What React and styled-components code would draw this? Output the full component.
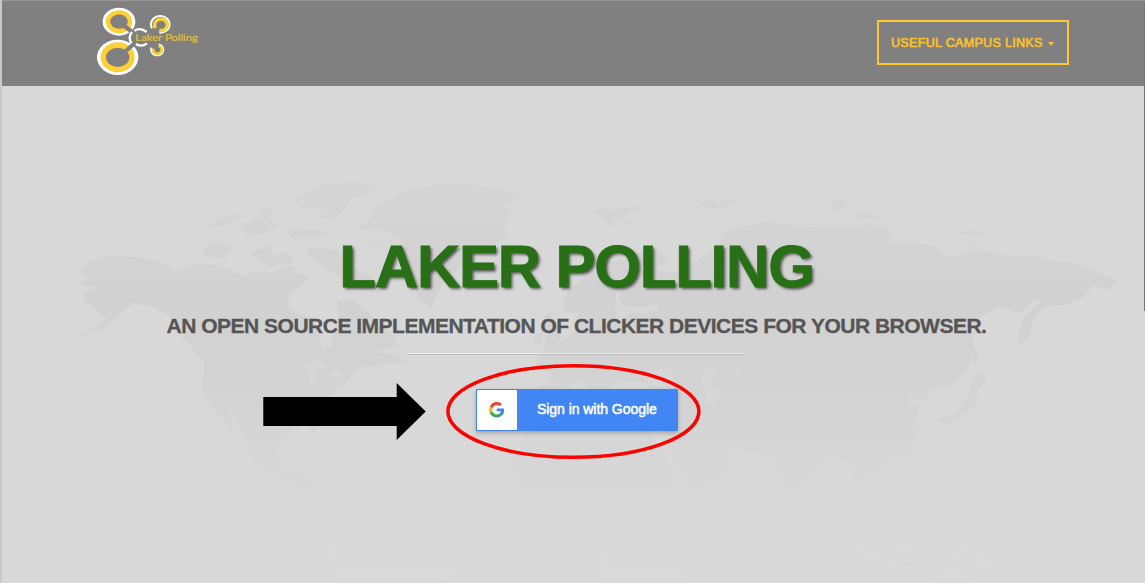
import React from "react";
import styled, { createGlobalStyle } from "styled-components";

const GlobalStyle = createGlobalStyle`
  * { box-sizing: border-box; }
  body { margin: 0; overflow: hidden; background: #d8d8d8; font-family: "Liberation Sans", Arial, sans-serif; }
`;

const Page = styled.div`
  position: relative;
  height: 583px;
  display: flex;
  flex-direction: column;
  background: #d8d8d8;
  border-left: 2px solid #c9c9c9;
  overflow: hidden;
`;

const Header = styled.header`
  height: 86px;
  flex: none;
  display: flex;
  justify-content: space-between;
  align-items: flex-start;
  padding: 0 76px 0 78px;
  background: #808080;
  border-top: 1px solid #979797;
`;

const Logo = styled.svg`
  display: block;
  width: 140px;
  height: 84px;
`;

const NavButton = styled.button`
  display: flex;
  align-items: center;
  height: 45px;
  width: 192px;
  margin-top: 19px;
  padding: 0 0 0 12px;
  border: 2px solid #fdc92f;
  background: transparent;
  color: #fbc02a;
  font: 12.5px "Liberation Sans", Arial, sans-serif;
  letter-spacing: 0.33px;
  -webkit-text-stroke: 0.65px #fbc02a;
  white-space: nowrap;
`;

const Caret = styled.span`
  margin: 2px 0 0 5px;
  border: 3.5px solid transparent;
  border-top: 4px solid #fbc02a;
  border-bottom: 0;
`;

const Hero = styled.main`
  position: relative;
  flex: 1;
  display: flex;
  flex-direction: column;
  align-items: center;
  padding-top: 146px;
  padding-left: 6px;
`;

const WorldMap = styled.svg`
  position: absolute;
  left: -2px;
  top: -86px;
  width: 1145px;
  height: 583px;
`;

const Title = styled.h1`
  position: relative;
  margin: 0;
  height: 70px;
  line-height: 70px;
  font-size: 60px;
  letter-spacing: -1.2px;
  color: #287016;
  -webkit-text-stroke: 0.8px #287016;
  text-shadow: 2px 2px 3px rgba(0, 0, 0, 0.6);
  white-space: nowrap;
`;

const Subtitle = styled.h2`
  position: relative;
  margin: 12px 0 0;
  height: 24px;
  line-height: 24px;
  font-size: 21px;
  letter-spacing: -0.5px;
  color: #555;
  -webkit-text-stroke: 0.3px #555;
  white-space: nowrap;
`;

const Divider = styled.div`
  position: relative;
  width: 337px;
  height: 2px;
  margin-top: 15px;
  border-top: 1px solid #eee;
  border-bottom: 1px solid #bdbdbd;
`;

const GoogleButton = styled.button`
  position: relative;
  display: flex;
  align-items: center;
  width: 202px;
  height: 42px;
  margin-top: 34px;
  padding: 1px;
  border: 0;
  border-radius: 1px;
  background: #4285f4;
  box-shadow: 0 2px 4px rgba(0, 0, 0, 0.25);
  color: #fff;
`;

const GoogleIcon = styled.span`
  display: flex;
  width: 40px;
  height: 40px;
  align-items: center;
  justify-content: center;
  background: #fff;
  border-radius: 1px;
`;

const GoogleLabel = styled.span`
  margin: 0 0 2px 20.5px;
  font: 14px/18px "Liberation Sans", Arial, sans-serif;
  letter-spacing: -0.05px;
  -webkit-text-stroke: 0.5px #fff;
  white-space: nowrap;
`;

const Annotations = styled.svg`
  position: absolute;
  left: -2px;
  top: 0;
  width: 1145px;
  height: 583px;
  pointer-events: none;
`;

const ScrollThumb = styled.div`
  position: absolute;
  right: 0;
  top: 2px;
  width: 1px;
  height: 309px;
  background: #777;
`;

function LakerLogo() {
  return (
    <Logo viewBox="0 3 420 252">
      <ellipse cx="117" cy="65" rx="49" ry="42" fill="#fff" />
      <ellipse cx="113" cy="172" rx="62" ry="53" fill="#fff" />
      <ellipse cx="117" cy="65" rx="33" ry="28" fill="#808080" stroke="#fdd034" strokeWidth="13" />
      <ellipse cx="113" cy="172" rx="43" ry="37" fill="#808080" stroke="#fdd034" strokeWidth="16" />
      <path d="M132 77 L166 103 M134 156 L170 124" stroke="#808080" strokeWidth="13" />
      <path d="M163 92 Q181 81 200 96 M156 96 Q143 111 154 130 M168 132 Q184 143 201 130" fill="none" stroke="#fff" strokeWidth="7" />
      <path d="M216 85 A28 25 0 1 1 238 98" fill="none" stroke="#fff" strokeWidth="6" />
      <path d="M227 84 A19 17 0 1 1 238 91" fill="none" stroke="#fdd034" strokeWidth="10" />
      <path d="M214 143 A19 17 0 1 0 236 133" fill="none" stroke="#fff" strokeWidth="5" />
      <path d="M220 146 A13 12 0 1 0 236 138" fill="none" stroke="#fdd034" strokeWidth="8" />
      <text x="166" y="122" textLength="188" lengthAdjust="spacingAndGlyphs" fill="#e3bf3d" stroke="#e3bf3d" strokeWidth="0.6" fontFamily="Lato, sans-serif" fontSize="30">Laker Polling</text>
    </Logo>
  );
}

function GoogleG() {
  return (
    <svg width="15.5" height="15.5" viewBox="0 0 48 48">
      <path fill="#EA4335" d="M24 9.5c3.54 0 6.71 1.22 9.21 3.6l6.85-6.85C35.9 2.38 30.47 0 24 0 14.62 0 6.51 5.38 2.56 13.22l7.98 6.19C12.43 13.72 17.74 9.5 24 9.5z" />
      <path fill="#4285F4" d="M46.98 24.55c0-1.57-.15-3.09-.38-4.55H24v9.02h12.94c-.58 2.96-2.26 5.48-4.78 7.18l7.73 6c4.51-4.18 7.09-10.36 7.09-17.65z" />
      <path fill="#FBBC05" d="M10.53 28.59A14.4 14.4 0 0 1 9.77 24c0-1.6.27-3.14.76-4.59l-7.98-6.19A23.9 23.9 0 0 0 0 24c0 3.88.92 7.54 2.56 10.78l7.97-6.19z" />
      <path fill="#34A853" d="M24 48c6.48 0 11.93-2.13 15.89-5.81l-7.73-6c-2.15 1.45-4.92 2.3-8.16 2.3-6.26 0-11.57-4.22-13.47-9.91l-7.98 6.19C6.51 42.62 14.62 48 24 48z" />
    </svg>
  );
}

function MapBackdrop() {
  return (
    <WorldMap viewBox="0 0 1145 583" aria-hidden="true">
      <defs>
        <linearGradient id="land" gradientUnits="userSpaceOnUse" x1="0" y1="180" x2="0" y2="583">
          <stop offset="0" stopColor="#d5d5d5" />
          <stop offset="0.3" stopColor="#d1d1d1" />
          <stop offset="0.5" stopColor="#d3d3d3" />
          <stop offset="0.76" stopColor="#d7d7d7" />
          <stop offset="0.87" stopColor="#d9d9d9" />
          <stop offset="1" stopColor="#dadada" />
        </linearGradient>
      </defs>
      <g fill="url(#land)">
        {/* North America */}
        <path d="M81 269 L91 261 L108 255 L124 256 L143 258 L164 263 L171 268 L175 273 L194 263 L216 265 L229 269 L244 276 L253 271 L274 272 L291 265 L297 273 L310 276 L300 286 L288 297 L289 310 L304 315 L318 327 L322 349 L331 348 L334 330 L339 316 L337 302 L351 298 L363 309 L371 314 L381 326 L393 335 L399 347 L378 351 L363 359 L367 363 L354 373 L346 384 L333 392 L329 406 L317 417 L316 436 L310 432 L306 425 L285 433 L277 443 L280 466 L289 473 L303 464 L301 478 L315 482 L321 498 L308 495 L294 485 L276 479 L256 468 L254 454 L242 432 L230 412 L233 433 L240 452 L230 430 L219 414 L207 404 L202 388 L204 362 L191 347 L177 332 L168 315 L153 307 L134 303 L124 310 L108 325 L91 335 L109 318 L100 316 L94 306 L84 301 L85 292 L97 287 L79 284 L88 279 Z" />
        {/* Greenland and the Arctic islands */}
        <path d="M354 229 L368 221 L375 206 L398 193 L431 185 L449 183 L490 187 L525 196 L503 205 L512 213 L503 229 L508 236 L497 244 L480 249 L462 266 L443 283 L431 308 L420 300 L410 281 L408 260 L398 238 L386 232 Z" />
        <path d="M288 205 L304 195 L323 184 L354 181 L380 187 L367 195 L350 199 L344 210 L333 220 L315 218 L328 209 L301 208 L307 199 Z M207 229 L220 218 L236 214 L244 216 L225 226 Z M203 249 L217 240 L232 248 L225 259 L205 256 Z M241 226 L265 215 L278 225 L265 235 L246 236 Z M283 231 L316 229 L330 235 L294 240 Z M309 246 L337 250 L350 267 L374 279 L368 291 L352 286 L339 277 L326 267 L307 256 Z M251 254 L267 244 L276 255 L288 251 L294 263 L270 267 Z M258 211 L269 208 L276 213 L268 218 Z" />
        <path d="M355 366 L373 352 L394 354 L407 363 L390 363 L378 367 Z M67 294 L75 296 L70 297 Z M343 474 L363 474 L382 481 L369 486 L352 482 Z" />
        {/* Eurasia */}
        <path d="M535 365 L543 350 L563 341 L575 331 L578 312 L596 290 L615 265 L637 253 L657 249 L668 260 L655 270 L675 272 L694 262 L709 252 L721 241 L726 229 L765 221 L811 227 L845 226 L893 232 L887 242 L902 241 L936 246 L944 257 L965 254 L974 248 L1002 255 L1034 256 L1054 261 L1077 263 L1103 275 L1117 281 L1108 290 L1093 285 L1084 297 L1065 305 L1044 306 L1034 318 L1029 335 L1019 348 L1018 331 L1025 316 L1041 302 L1034 299 L1019 314 L1001 306 L982 316 L973 327 L974 350 L968 368 L954 384 L938 389 L932 389 L926 401 L911 398 L908 400 L919 406 L916 420 L917 438 L909 451 L900 459 L884 463 L882 479 L873 474 L870 466 L862 477 L874 495 L867 492 L855 478 L851 461 L840 459 L827 458 L816 466 L807 480 L793 500 L784 490 L776 467 L773 458 L760 453 L737 450 L714 443 L705 432 L703 423 L711 440 L727 455 L733 467 L719 481 L692 491 L681 473 L668 445 L664 430 L682 426 L676 420 L646 421 L627 417 L628 402 L637 396 L655 392 L640 382 L617 382 L600 398 L590 391 L583 380 L574 383 L560 391 L551 409 L534 411 L533 388 L548 383 L552 374 Z" />
        {/* Scandinavia, Britain and the islands to the north */}
        <path d="M563 300 L571 287 L591 274 L608 262 L622 260 L626 272 L616 286 L615 306 L603 318 L598 310 L589 308 L581 314 L565 312 Z M543 318 L550 311 L555 325 L562 338 L554 345 L543 349 L547 336 Z M536 334 L544 331 L541 343 L532 345 Z M595 211 L607 208 L619 210 L633 205 L641 208 L629 214 L622 216 L633 222 L626 224 L618 218 L611 228 L605 221 L597 216 Z M697 203 L712 198 L718 204 L729 197 L739 202 L725 208 L710 209 Z M831 200 L843 199 L848 208 L834 212 Z M853 216 L867 211 L880 218 L862 220 Z M860 223 L894 229 L873 237 L859 233 Z M721 243 L735 234 L763 228 L748 236 L733 247 Z M957 232 L978 230 L986 235 L966 236 Z M970 241 L981 243 L973 245 Z M1082 257 L1097 256 L1090 258 Z" />
        {/* Africa, South America, Japan and the southern islands */}
        <path d="M530 423 L552 410 L577 411 L596 420 L624 424 L649 429 L661 449 L681 488 L697 494 L717 492 L702 514 L690 530 L682 551 L683 583 L603 583 L601 546 L591 533 L591 510 L569 503 L538 500 L514 487 L516 459 Z M330 538 L350 525 L380 530 L409 535 L421 546 L458 552 L454 575 L442 583 L337 583 L331 559 Z M975 374 L982 371 L987 380 L978 388 L975 405 L960 417 L944 426 L939 420 L958 410 L968 396 Z M973 345 L979 359 L974 363 Z M850 531 L861 541 L879 557 L873 561 L858 548 Z M891 538 L913 527 L921 541 L907 551 L894 548 Z M936 546 L954 542 L974 551 L999 566 L979 566 L953 557 Z M878 560 L914 567 L908 570 L882 565 Z M926 583 L957 565 L974 583 Z" />
      </g>
      <g fill="#d7d7d7">
        <path d="M705 370 L716 367 L717 374 L710 378 L714 387 L720 391 L716 404 L706 403 L706 391 L702 380 Z M735 373 L739 369 L740 376 L736 378 Z M645 374 L659 370 L671 367 L674 382 L663 387 L650 384 Z M616 292 L622 285 L619 298 L622 306 L641 307 L658 304 L659 310 L642 314 L629 313 L617 323 L615 310 Z M301 365 L316 360 L327 367 L314 370 Z M309 373 L315 368 L316 381 L310 385 Z M330 372 L340 370 L342 378 L334 378 Z M365 247 L371 237 L395 239 L402 256 L390 252 Z" />
      </g>
      <g fill="none" stroke="#d3d3d3" strokeWidth="2" strokeLinecap="round">
        <path d="M723 244 Q731 236 762 228 M107 319 Q95 330 79 336" />
        <path strokeDasharray="1 7" d="M976 381 Q1003 365 1017 345 M1044 330 L1065 342 M650 212 L662 210 M1060 229 L1070 227" />
        <path stroke="#d6d6d6" strokeDasharray="2 6" d="M322 437 L342 452 L351 468 M97 458 L115 468 M932 438 L910 467 L922 488" />
      </g>
    </WorldMap>
  );
}

export default function App() {
  return (
    <>
      <GlobalStyle />
      <Page>
        <Header>
          <LakerLogo />
          <NavButton>
            USEFUL CAMPUS LINKS
            <Caret />
          </NavButton>
        </Header>
        <Hero>
          <MapBackdrop />
          <Title>LAKER POLLING</Title>
          <Subtitle>AN OPEN SOURCE IMPLEMENTATION OF CLICKER DEVICES FOR YOUR BROWSER.</Subtitle>
          <Divider />
          <GoogleButton>
            <GoogleIcon>
              <GoogleG />
            </GoogleIcon>
            <GoogleLabel>Sign in with Google</GoogleLabel>
          </GoogleButton>
        </Hero>
        <Annotations viewBox="0 0 1145 583" aria-hidden="true">
          <path d="M263.3 397 H396.7 V383 L425.7 411.5 L396.7 440 V426 H263.3 Z" />
          <ellipse cx="573.4" cy="411.5" rx="125.5" ry="45.8" fill="none" stroke="#f00" strokeWidth="3.5" />
        </Annotations>
        <ScrollThumb />
      </Page>
    </>
  );
}
